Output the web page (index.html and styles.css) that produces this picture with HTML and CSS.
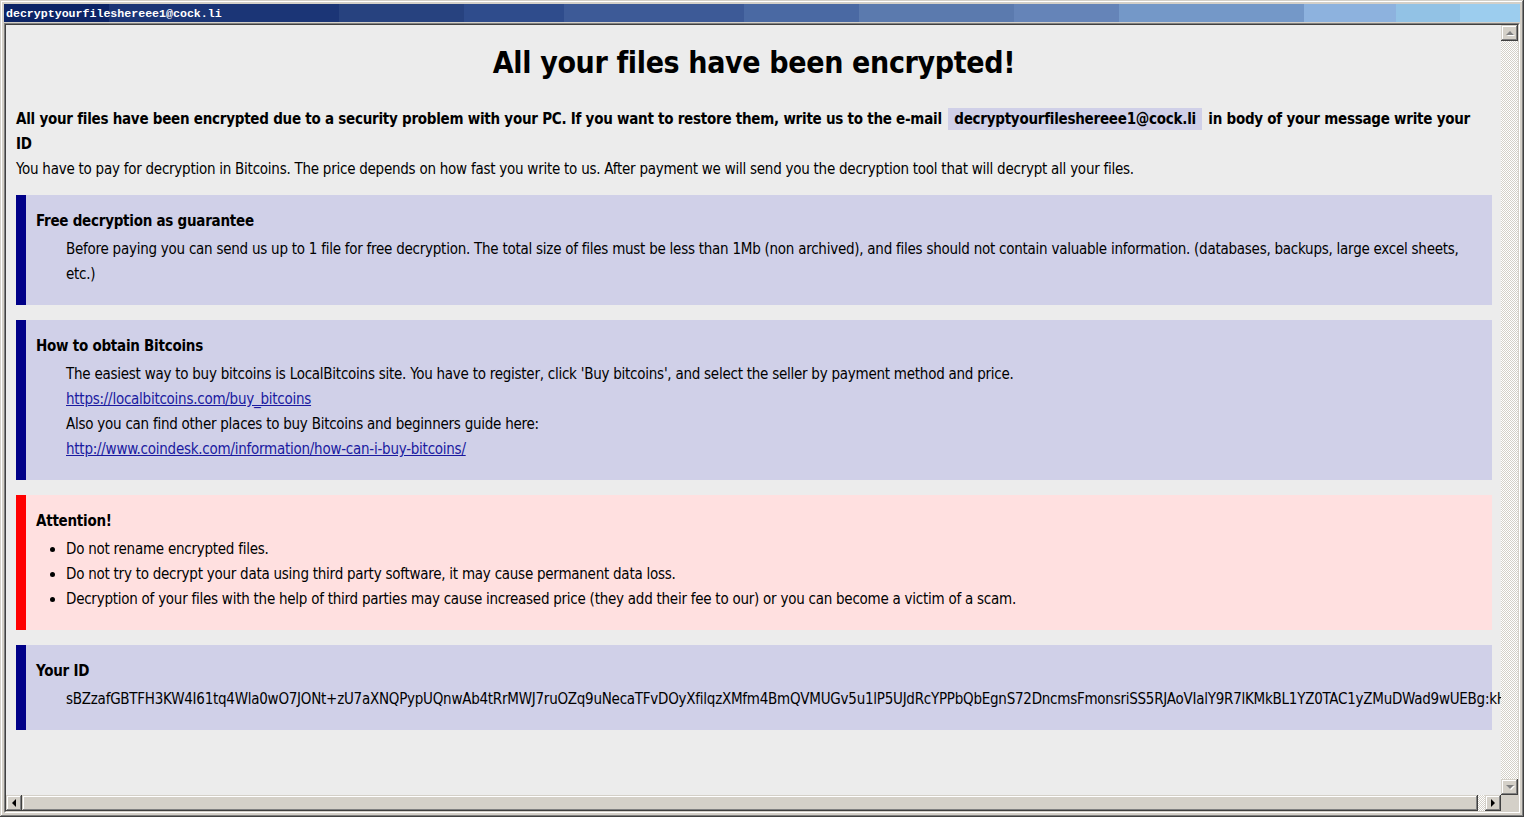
FILE: index.html
```html
<!DOCTYPE html>
<html>
<head>
<meta charset="utf-8">
<title>decryptyourfileshereee1@cock.li</title>
<link rel="stylesheet" href="styles.css">
</head>
<body>
<div class="window">
  <div class="titlebar"><span class="title-text">decryptyourfileshereee1@cock.li</span></div>
  <div class="client">
    <div class="client-inner">
      <div class="content">
        <h1 class="headline">All your files have been encrypted!</h1>
        <p class="lead">All your files have been encrypted due to a security problem with your PC. If you want to restore them, write us to the e-mail <span class="email">decryptyourfileshereee1@cock.li</span> in body of your message write your ID</p>
        <p class="plain">You have to pay for decryption in Bitcoins. The price depends on how fast you write to us. After payment we will send you the decryption tool that will decrypt all your files.</p>

        <div class="note">
          <div class="note-title">Free decryption as guarantee</div>
          <div class="note-body">Before paying you can send us up to 1 file for free decryption. The total size of files must be less than 1Mb (non archived), and files should not contain valuable information. (databases, backups, large excel sheets, etc.)</div>
        </div>

        <div class="note">
          <div class="note-title">How to obtain Bitcoins</div>
          <div class="note-body">
            The easiest way to buy bitcoins is LocalBitcoins site. You have to register, click 'Buy bitcoins', and select the seller by payment method and price.<br>
            <a class="link" href="#">https://localbitcoins.com/buy_bitcoins</a><br>
            Also you can find other places to buy Bitcoins and beginners guide here:<br>
            <a class="link" href="#">http://www.coindesk.com/information/how-can-i-buy-bitcoins/</a>
          </div>
        </div>

        <div class="note note-alert">
          <div class="note-title">Attention!</div>
          <ul class="alert-list">
            <li>Do not rename encrypted files.</li>
            <li>Do not try to decrypt your data using third party software, it may cause permanent data loss.</li>
            <li>Decryption of your files with the help of third parties may cause increased price (they add their fee to our) or you can become a victim of a scam.</li>
          </ul>
        </div>

        <div class="note">
          <div class="note-title">Your ID</div>
          <div class="note-body id-line">sBZzafGBTFH3KW4I61tq4Wla0wO7JONt+zU7aXNQPypUQnwAb4tRrMWJ7ruOZq9uNecaTFvDOyXfilqzXMfm4BmQVMUGv5u1lP5UJdRcYPPbQbEgnS72DncmsFmonsriSS5RJAoVIalY9R7lKMkBL1YZ0TAC1yZMuDWad9wUEBg:kH7vQ2pXrT9aLmN4sW</div>
        </div>
      </div>
      <div class="vscroll">
        <div class="sbtn"><span class="arrow arrow-up"></span></div>
        <div class="track"></div>
        <div class="sbtn"><span class="arrow arrow-down"></span></div>
      </div>
      <div class="hscroll">
        <div class="sbtn"><span class="arrow arrow-left"></span></div>
        <div class="thumb"></div>
        <div class="htrack"></div>
        <div class="sbtn"><span class="arrow arrow-right"></span></div>
      </div>
      <div class="corner"></div>
    </div>
  </div>
</div>
</body>
</html>
```

FILE: styles.css
```css
html, body {
  margin: 0;
  padding: 0;
  background: #d4d0c8;
}

.window {
  width: 1524px;
  height: 817px;
  box-sizing: border-box;
  padding: 4px;
  display: flex;
  flex-direction: column;
  gap: 1px;
  background: #d4d0c8;
  box-shadow: inset -1px -1px #404040, inset 1px 1px #d4d0c8, inset -2px -2px #808080, inset 2px 2px #ffffff;
  overflow: hidden;
}

.titlebar {
  height: 18px;
  flex: none;
  display: flex;
  align-items: center;
  padding-left: 2px;
  background: linear-gradient(to right,
    #0c2466 0, #0c2466 105px,
    #1b3576 105px, #1b3576 335px,
    #27427f 335px, #27427f 460px,
    #2f4c8c 460px, #2f4c8c 560px,
    #3d5a97 560px, #3d5a97 740px,
    #4a69a3 740px, #4a69a3 855px,
    #5b7aae 855px, #5b7aae 1010px,
    #6584b8 1010px, #6584b8 1115px,
    #7498c8 1115px, #7498c8 1300px,
    #8db2de 1300px, #8db2de 1392px,
    #92c2e5 1392px, #92c2e5 1456px,
    #9ccdee 1456px);
}

.title-text {
  font-family: "Liberation Mono", "DejaVu Sans Mono", monospace;
  font-weight: bold;
  font-size: 11.6px;
  color: #ffffff;
}

.client {
  flex: 1;
  border: 1px solid;
  border-color: #808080 #ffffff #ffffff #808080;
  min-height: 0;
}

.client-inner {
  height: 100%;
  box-sizing: border-box;
  border: 1px solid;
  border-color: #404040 #d4d0c8 #d4d0c8 #404040;
  display: grid;
  grid-template-columns: 1fr 17px;
  grid-template-rows: 1fr 16px;
  background: #ececec;
}

.content {
  overflow: hidden;
  padding: 0 9px 0 10px;
  min-width: 0;
  min-height: 0;
  font-family: "DejaVu Sans Condensed", "DejaVu Sans", sans-serif;
  font-stretch: condensed;
  font-size: 15px;
  letter-spacing: -0.25px;
  line-height: 25px;
  color: #000000;
}

.headline {
  margin: 20px 0 26px;
  font-size: 30px;
  letter-spacing: -0.35px;
  line-height: 36px;
  font-weight: bold;
  text-align: center;
}

.lead {
  margin: 0;
  padding-right: 14px;
  font-weight: bold;
}

.email {
  background: #d0d0e8;
  padding: 2px 6px;
  margin: 0 2px;
}

.plain {
  margin: 0 0 13px;
}

.note {
  background: #d0d0e8;
  border-left: 10px solid #000088;
  padding: 14px 10px 18px 10px;
  margin-bottom: 15px;
}

.note-alert {
  background: #ffe0e0;
  border-left-color: #ff0000;
}

.note-title {
  font-weight: bold;
  margin-bottom: 3px;
}

.note-body {
  padding-left: 30px;
}

.id-line {
  white-space: nowrap;
  width: 0;
  overflow: visible;
}

.link {
  color: #1a1aa0;
  text-decoration: underline;
}

.alert-list {
  margin: 0;
  padding-left: 30px;
  list-style: disc;
}

.vscroll {
  display: flex;
  flex-direction: column;
}

.track, .htrack {
  flex: 1;
  background-color: #d4d0c8;
  background-image: conic-gradient(#ffffff 25%, transparent 0 50%, #ffffff 0 75%, transparent 0);
  background-size: 2px 2px;
}

.htrack {
  flex: none;
  width: 7px;
}

.hscroll {
  display: flex;
}

.sbtn {
  flex: none;
  width: 16px;
  height: 16px;
  box-sizing: border-box;
  background: #d4d0c8;
  box-shadow: inset -1px -1px #404040, inset 1px 1px #d4d0c8, inset -2px -2px #808080, inset 2px 2px #ffffff;
  display: flex;
  align-items: center;
  justify-content: center;
}

.vscroll .sbtn {
  width: 17px;
}

.thumb {
  flex: 1;
  background: #d4d0c8;
  box-shadow: inset -1px -1px #404040, inset 1px 1px #d4d0c8, inset -2px -2px #808080, inset 2px 2px #ffffff;
}

.corner {
  background: #d4d0c8;
}

.arrow {
  width: 0;
  height: 0;
  border-style: solid;
}

.arrow-up {
  border-width: 0 4px 4px 4px;
  border-color: transparent transparent #808080 transparent;
  filter: drop-shadow(1px 1px 0 #ffffff);
}

.arrow-down {
  border-width: 4px 4px 0 4px;
  border-color: #808080 transparent transparent transparent;
  filter: drop-shadow(1px 1px 0 #ffffff);
}

.arrow-left {
  border-width: 4px 4px 4px 0;
  border-color: transparent #000000 transparent transparent;
}

.arrow-right {
  border-width: 4px 0 4px 4px;
  border-color: transparent transparent transparent #000000;
}
```
